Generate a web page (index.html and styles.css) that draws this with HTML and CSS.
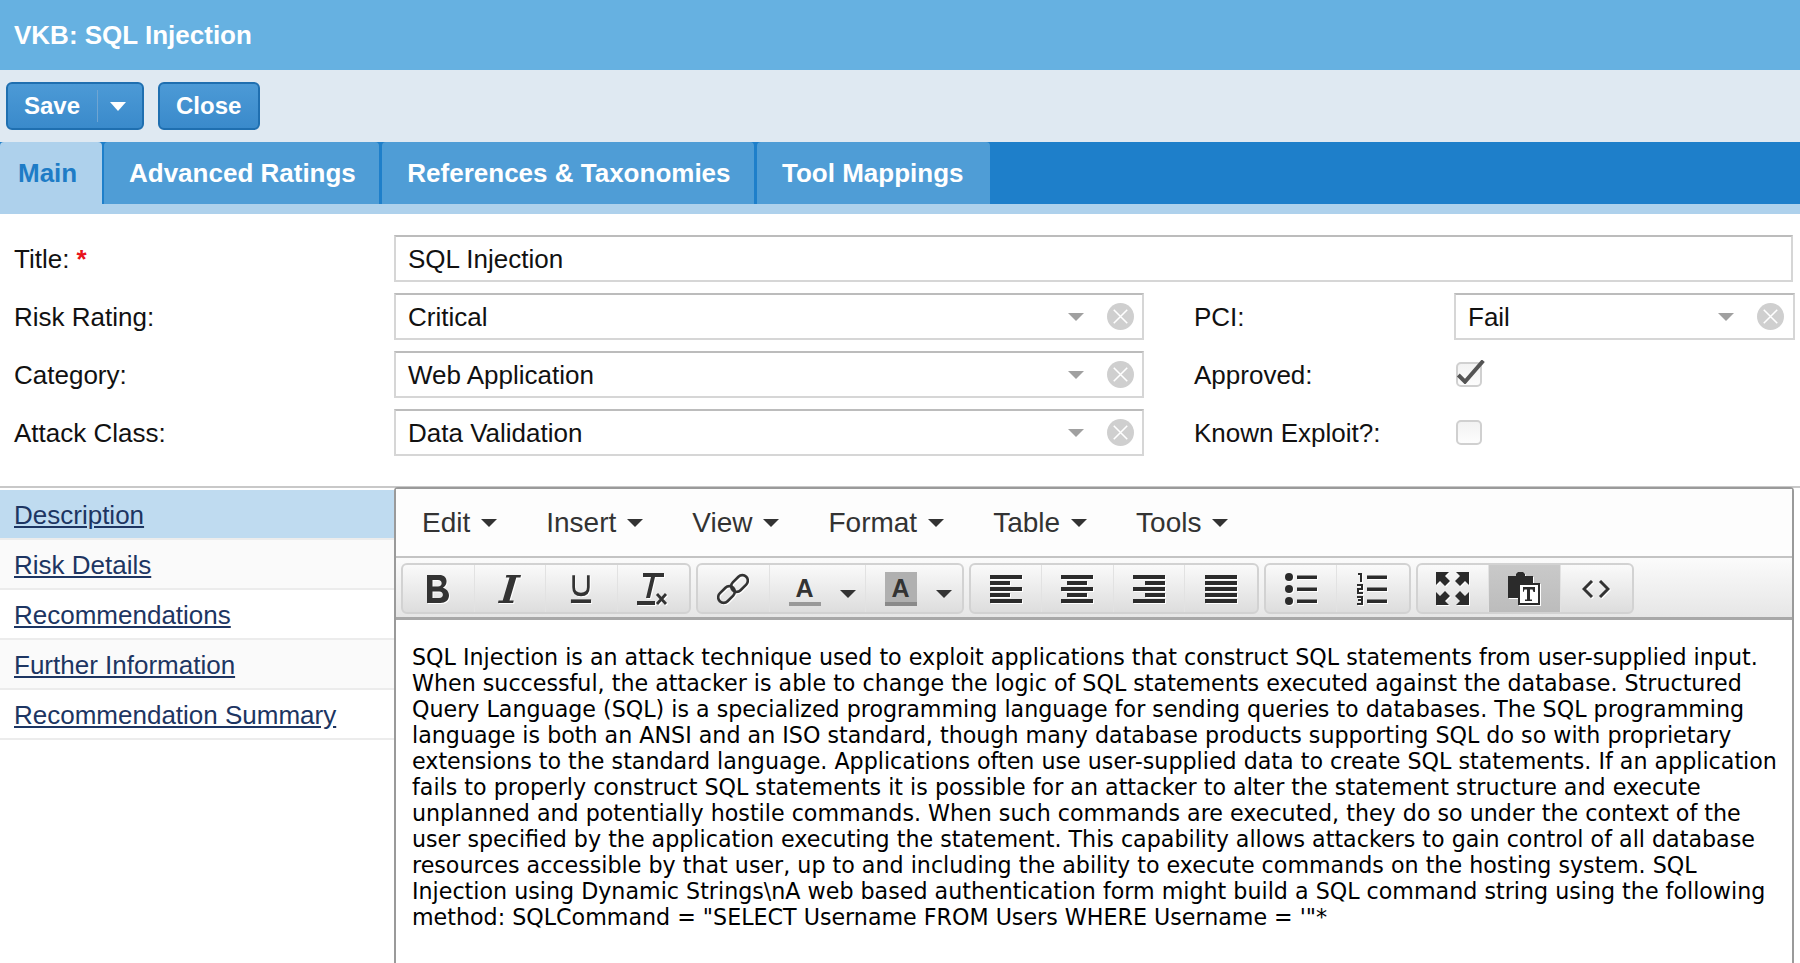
FILE: index.html
```html
<!DOCTYPE html>
<html lang="en">
	<head>
		<title>VKB: SQL Injection</title>
		<meta charset="utf-8">
		<link rel="stylesheet" href="styles.css">
	</head>
	<body>
		<div class="header">VKB: SQL Injection</div>

		<div class="actions">
			<div class="btn btn-split">
				<span>Save</span>
				<span class="btn-sep"></span>
				<span class="btn-caret"></span>
			</div>
			<div class="btn">Close</div>
		</div>

		<div class="tabs">
			<div class="tab tab-active">Main</div>
			<div class="tab">Advanced Ratings</div>
			<div class="tab">References &amp; Taxonomies</div>
			<div class="tab tab-last">Tool Mappings</div>
		</div>
		<div class="tabs-foot"></div>

		<div class="form">
			<div class="form-row">
				<label class="lbl">Title: <span class="req">*</span></label>
				<div class="input input-wide">SQL Injection</div>
			</div>
			<div class="form-row">
				<label class="lbl">Risk Rating:</label>
				<div class="input input-select">Critical
					<span class="sel-arrow"></span>
					<svg class="sel-clear" viewBox="0 0 28 28"><circle cx="14" cy="14" r="14" fill="#cfcfcf"/><path d="M7 7L21 21M21 7L7 21" stroke="#fff" stroke-width="1.6"/></svg>
				</div>
				<label class="lbl lbl-side">PCI:</label>
				<div class="input input-select input-short">Fail
					<span class="sel-arrow"></span>
					<svg class="sel-clear" viewBox="0 0 28 28"><circle cx="14" cy="14" r="14" fill="#cfcfcf"/><path d="M7 7L21 21M21 7L7 21" stroke="#fff" stroke-width="1.6"/></svg>
				</div>
			</div>
			<div class="form-row">
				<label class="lbl">Category:</label>
				<div class="input input-select">Web Application
					<span class="sel-arrow"></span>
					<svg class="sel-clear" viewBox="0 0 28 28"><circle cx="14" cy="14" r="14" fill="#cfcfcf"/><path d="M7 7L21 21M21 7L7 21" stroke="#fff" stroke-width="1.6"/></svg>
				</div>
				<label class="lbl lbl-side">Approved:</label>
				<div class="check">
					<svg class="check-mark" viewBox="0 0 30 24" width="30" height="24"><path d="M2.300 15L9 21.700L27.300 0.700" fill="none" stroke="#555" stroke-width="4"/></svg>
				</div>
			</div>
			<div class="form-row">
				<label class="lbl">Attack Class:</label>
				<div class="input input-select">Data Validation
					<span class="sel-arrow"></span>
					<svg class="sel-clear" viewBox="0 0 28 28"><circle cx="14" cy="14" r="14" fill="#cfcfcf"/><path d="M7 7L21 21M21 7L7 21" stroke="#fff" stroke-width="1.6"/></svg>
				</div>
				<label class="lbl lbl-side">Known Exploit?:</label>
				<div class="check"></div>
			</div>
		</div>

		<div class="lower">
			<div class="side-nav">
				<a class="side-item side-active" href="#">Description</a>
				<a class="side-item" href="#">Risk Details</a>
				<a class="side-item side-plain" href="#">Recommendations</a>
				<a class="side-item" href="#">Further Information</a>
				<a class="side-item side-plain" href="#">Recommendation Summary</a>
			</div>

			<div class="editor">
				<div class="menubar">
					<span class="menu">Edit<i class="caret"></i></span>
					<span class="menu">Insert<i class="caret"></i></span>
					<span class="menu">View<i class="caret"></i></span>
					<span class="menu">Format<i class="caret"></i></span>
					<span class="menu">Table<i class="caret"></i></span>
					<span class="menu">Tools<i class="caret"></i></span>
				</div>
				<div class="toolbar">
					<div class="tb-group">
						<div class="tb-btn"><svg viewBox="3 1 18 22" width="22" height="28" preserveAspectRatio="none"><path fill="#333" fill-rule="evenodd" d="M3 1h10c4 0 6 2 6 5 0 2-1 4-3 5 3 1 5 3 5 6 0 4-3 6-7 6H3zM7.500 5v5h4.500c2 0 3-1 3-2.500S14 5 12 5zM7.500 14v5h5.500c2 0 3-1 3-2.500S15 14 13 14z"/></svg></div>
						<div class="tb-btn"><svg viewBox="1 1 22 22" width="23" height="28" preserveAspectRatio="none"><path fill="#333" d="M9 1h14l-.5 2h-4L12 21h4l-.5 2H1l.5-2h4L12 3H8.500z"/></svg></div>
						<div class="tb-btn"><svg viewBox="0 0 24 24" width="22" height="29" preserveAspectRatio="none"><path fill="none" stroke="#333" stroke-width="3" d="M4 1v10c0 4 3 6 8 6s8-2 8-6V1"/><rect x="1" y="21" width="22" height="3" fill="#333"/></svg></div>
						<div class="tb-btn"><svg viewBox="0 0 32 32" width="32" height="32"><path fill="#333" d="M6 0h21v4h-9L13 25H9L14 4H6zM0 28h18v4H0z"/><path stroke="#333" stroke-width="2.800" d="M20 21l9 10M29 21l-9 10"/></svg></div>
					</div>
					<div class="tb-group">
						<div class="tb-btn"><svg viewBox="0 0 32 32" width="32" height="32"><g fill="none" stroke="#333" stroke-width="2.600"><rect x="13" y="5" width="19" height="11" rx="5.500" transform="rotate(-45 22.500 10.500)"/><rect x="0" y="16" width="19" height="11" rx="5.500" transform="rotate(-45 9.500 21.500)"/></g></svg></div>
						<div class="tb-btn tb-wide">
							<span class="fore"><span class="fore-a">A</span></span>
							<i class="caret caret-tb"></i>
						</div>
						<div class="tb-btn tb-wide">
							<span class="fore fore-back"><span class="fore-a">A</span></span>
							<i class="caret caret-tb"></i>
						</div>
					</div>
					<div class="tb-group">
						<div class="tb-btn"><svg viewBox="0 0 32 28" width="32" height="28"><path fill="#2b2b2b" d="M0 0h32v4H0zM0 6h20v4H0zM0 12h32v4H0zM0 18h20v4H0zM0 24h32v4H0z"/></svg></div>
						<div class="tb-btn"><svg viewBox="0 0 32 28" width="32" height="28"><path fill="#2b2b2b" d="M0 0h32v4H0zM6 6h20v4H6zM0 12h32v4H0zM6 18h20v4H6zM0 24h32v4H0z"/></svg></div>
						<div class="tb-btn"><svg viewBox="0 0 32 28" width="32" height="28"><path fill="#2b2b2b" d="M0 0h32v4H0zM12 6h20v4H12zM0 12h32v4H0zM12 18h20v4H12zM0 24h32v4H0z"/></svg></div>
						<div class="tb-btn"><svg viewBox="0 0 32 28" width="32" height="28"><path fill="#2b2b2b" d="M0 0h32v4H0zM0 6h32v4H0zM0 12h32v4H0zM0 18h32v4H0zM0 24h32v4H0z"/></svg></div>
					</div>
					<div class="tb-group">
						<div class="tb-btn"><svg viewBox="0 0 32 32" width="32" height="32"><g fill="#2b2b2b"><circle cx="4" cy="4" r="4"/><circle cx="4" cy="16" r="4"/><circle cx="4" cy="28" r="4"/><path d="M12 2.500h20v3.500H12zM12 14.500h20v3.500H12zM12 26.500h20v3.500H12z"/></g></svg></div>
						<div class="tb-btn"><svg viewBox="0 0 32 32" width="32" height="32"><g fill="#2b2b2b"><path d="M1 0h4v9H3V2H1zM0 11h6v6H2v2h4v2H0v-6h4v-2H0zM0 23h6v9H0v-2h4v-2H1v-2h3v-1H0z"/><path d="M10 2.500h20v3.500H10zM10 14.500h20v3.500H10zM10 26.500h20v3.500H10z"/></g></svg></div>
					</div>
					<div class="tb-group">
						<div class="tb-btn"><svg viewBox="0 0 33 33" width="33" height="33"><path fill="#2b2b2b" d="M0 0h13L9 4l5 5-5 5-5-5-4 4zM33 0H20l4 4-5 5 5 5 5-5 4 4zM0 33h13l-4-4 5-5-5-5-5 5-4-4zM33 33H20l4-4-5-5 5-5 5 5 4-4z"/></svg></div>
						<div class="tb-btn tb-on"><svg viewBox="0 0 32 33" width="32" height="33"><path fill="#2b2b2b" d="M0 4h8V2l2-2h5l2 2v2h8v8H12v14H0z"/><rect x="11" y="12" width="20" height="20" fill="#fff" stroke="#2b2b2b" stroke-width="2"/><path fill="#2b2b2b" d="M15 15h12v5h-1.500l-1-2.500H22v10h2v1.500h-7V27.500h2v-10h-2.500l-1 2.500H15z"/></svg></div>
						<div class="tb-btn"><svg viewBox="0 0 28 18" width="28" height="18"><path fill="none" stroke="#333" stroke-width="3" d="M10 1L2 9l8 8M18 1l8 8-8 8"/></svg></div>
					</div>
				</div>
				<div class="edit-area">SQL Injection is an attack technique used to exploit applications that construct SQL statements from user-supplied input. When successful, the attacker is able to change the logic of SQL statements executed against the database. Structured Query Language (SQL) is a specialized programming language for sending queries to databases. The SQL programming language is both an ANSI and an ISO standard, though many database products supporting SQL do so with proprietary extensions to the standard language. Applications often use user-supplied data to create SQL statements. If an application fails to properly construct SQL statements it is possible for an attacker to alter the statement structure and execute unplanned and potentially hostile commands. When such commands are executed, they do so under the context of the user specified by the application executing the statement. This capability allows attackers to gain control of all database resources accessible by that user, up to and including the ability to execute commands on the hosting system. SQL Injection using Dynamic Strings\nA web based authentication form might build a SQL command string using the following method: SQLCommand = "SELECT Username FROM Users WHERE Username = '"*</div>
			</div>
		</div>
	</body>
</html>
```

FILE: styles.css
```css
/*
 * RESET
 */
* { margin: 0; padding: 0; box-sizing: border-box; }
html, body { height: 100%; overflow: hidden; }
body { font-family: "Liberation Sans", Arial, sans-serif; font-size: 26px; color: #111; background: #fff; }

/*
 * HEADER
 */
.header {
	height: 70px; padding: 0 14px;
	display: flex; align-items: center;
	background: #66b1e1;
	color: #fff; font-weight: bold; font-size: 26px;
}

.actions {
	height: 72px; padding: 12px 6px 0;
	display: flex; align-items: flex-start; gap: 14px;
	background: #dfe9f2;
}
.btn {
	height: 48px; padding: 0 17px 0 16px;
	display: flex; align-items: center;
	border: 2px solid #1f6fb0; border-radius: 6px;
	background-image: linear-gradient(#4c9ad6, #3a8acb);
	color: #fff; font-weight: bold; font-size: 24px;
}
.btn-split { width: 138px; padding-right: 0; }
.btn-sep { width: 1px; height: 32px; margin: 0 12px 0 17px; background: #6fa5d2; }
.btn-caret { width: 0; height: 0; border: 8px solid transparent; border-top: 9px solid #fff; border-bottom: 0; }

/*
 * TABS
 */
.tabs { height: 62px; display: flex; background: #1e7fca; }
.tab {
	padding: 0 23.500px 0 25px; margin-right: 3px;
	display: flex; align-items: center;
	border-radius: 4px 4px 0 0;
	background: #4f9dd6;
	color: #fff; font-weight: bold; font-size: 26px;
}
.tab-active { width: 102px; margin-right: 2px; padding: 0 0 0 18px; background: #aed1ec; color: #1e7cc6; }
.tab-last { padding-right: 26px; }
.tabs-foot { height: 10px; background: #aed1ec; }

/*
 * FORM
 */
.form { height: 274px; padding: 21px 7px 0 14px; border-bottom: 2px solid #c8c8c8; }
.form-row { height: 46px; margin-bottom: 12px; display: flex; align-items: center; }
.lbl { width: 380px; flex: none; padding-top: 2px; }
.lbl-side { width: 260px; margin-left: 50px; }
.req { color: #e8131b; font-weight: bold; }
.input {
	height: 47px; padding: 2px 12px 0; position: relative;
	display: flex; align-items: center;
	border: 2px solid #d6d6d6; border-top-color: #bcbcbc;
}
.input-wide { flex: 1; }
.input-select { width: 750px; flex: none; }
.input-short { width: 341px; }
.sel-arrow {
	position: absolute; right: 58px; top: 18px;
	width: 0; height: 0;
	border: 8px solid transparent; border-top: 8px solid #a0a0a0; border-bottom: 0;
}
.sel-clear { position: absolute; right: 8px; top: 8px; width: 27px; height: 27px; }
.input-short .sel-arrow { right: 59px; }
.input-short .sel-clear { right: 9px; }
.check {
	width: 26px; height: 25px; margin-left: 2px; position: relative;
	border: 2px solid #d0d0d0; border-radius: 5px;
	background-image: linear-gradient(#f2f2f2, #fdfdfd);
}
.check-mark { position: absolute; left: -2px; top: -4px; }

/*
 * LOWER: side nav + editor
 */
.lower { display: flex; height: 475px; }
.side-nav { width: 394px; flex: none; padding-top: 2px; }
.side-item {
	height: 50px; padding: 2px 14px 0;
	display: flex; align-items: center;
	border-bottom: 2px solid #ececec;
	background: #fafafa;
	color: #1d3562; text-decoration: underline;
}
.side-plain { background: #fff; }
.side-active { background: #bfdbf0; }

.editor {
	width: 1400px; height: 476px; flex: none; margin-top: -1px;
	border: 2px solid #9a9a9a; border-bottom: 0; border-radius: 4px 4px 0 0;
}
.menubar {
	height: 69px; padding-left: 26px;
	display: flex; align-items: center; gap: 49px;
	border-bottom: 2px solid #c4c4c4;
	background: #fdfdfd;
	color: #333; font-size: 28px;
}
.menu { display: flex; align-items: center; }
.caret {
	display: block; margin-left: 11px;
	width: 0; height: 0;
	border: 8px solid transparent; border-top: 8px solid #333; border-bottom: 0;
}
.toolbar {
	height: 62px; padding: 5px 5px 0;
	display: flex; gap: 5px;
	border-bottom: 3px solid #a8a8a8;
	background-image: linear-gradient(#fbfbfb, #e6e6e6);
}
.tb-group {
	height: 51px; display: flex;
	border: 2px solid #d2d2d2; border-radius: 6px;
	background-image: linear-gradient(#fafafa, #dddddd);
}
.tb-btn {
	width: 71.500px; display: flex; align-items: center; justify-content: center;
	border-right: 1px solid #e2e2e2;
}
.tb-btn:last-child { border-right: 0; }
.tb-btn svg { filter: drop-shadow(1px 1px 0 #fff); }
.tb-wide { width: 96px; padding-left: 19px; justify-content: flex-start; }
.tb-on { background-image: linear-gradient(#c9c9c9, #bcbcbc); }
.fore { width: 32px; height: 34px; display: block; border-bottom: 4px solid #999; text-align: center; }
.fore-back { background: #b0b0b0; border-bottom-color: #8a8a8a; }
.fore-a { color: #333; font-weight: bold; font-size: 25px; line-height: 32px; display: block; }
.caret-tb { margin-left: 19px; margin-top: 10px; }

.edit-area {
	padding: 24px 10px 0 16px;
	background: #fff;
	color: #000;
	font-family: "DejaVu Sans", Verdana, sans-serif;
	font-size: 22.200px; line-height: 26px;
}
```
